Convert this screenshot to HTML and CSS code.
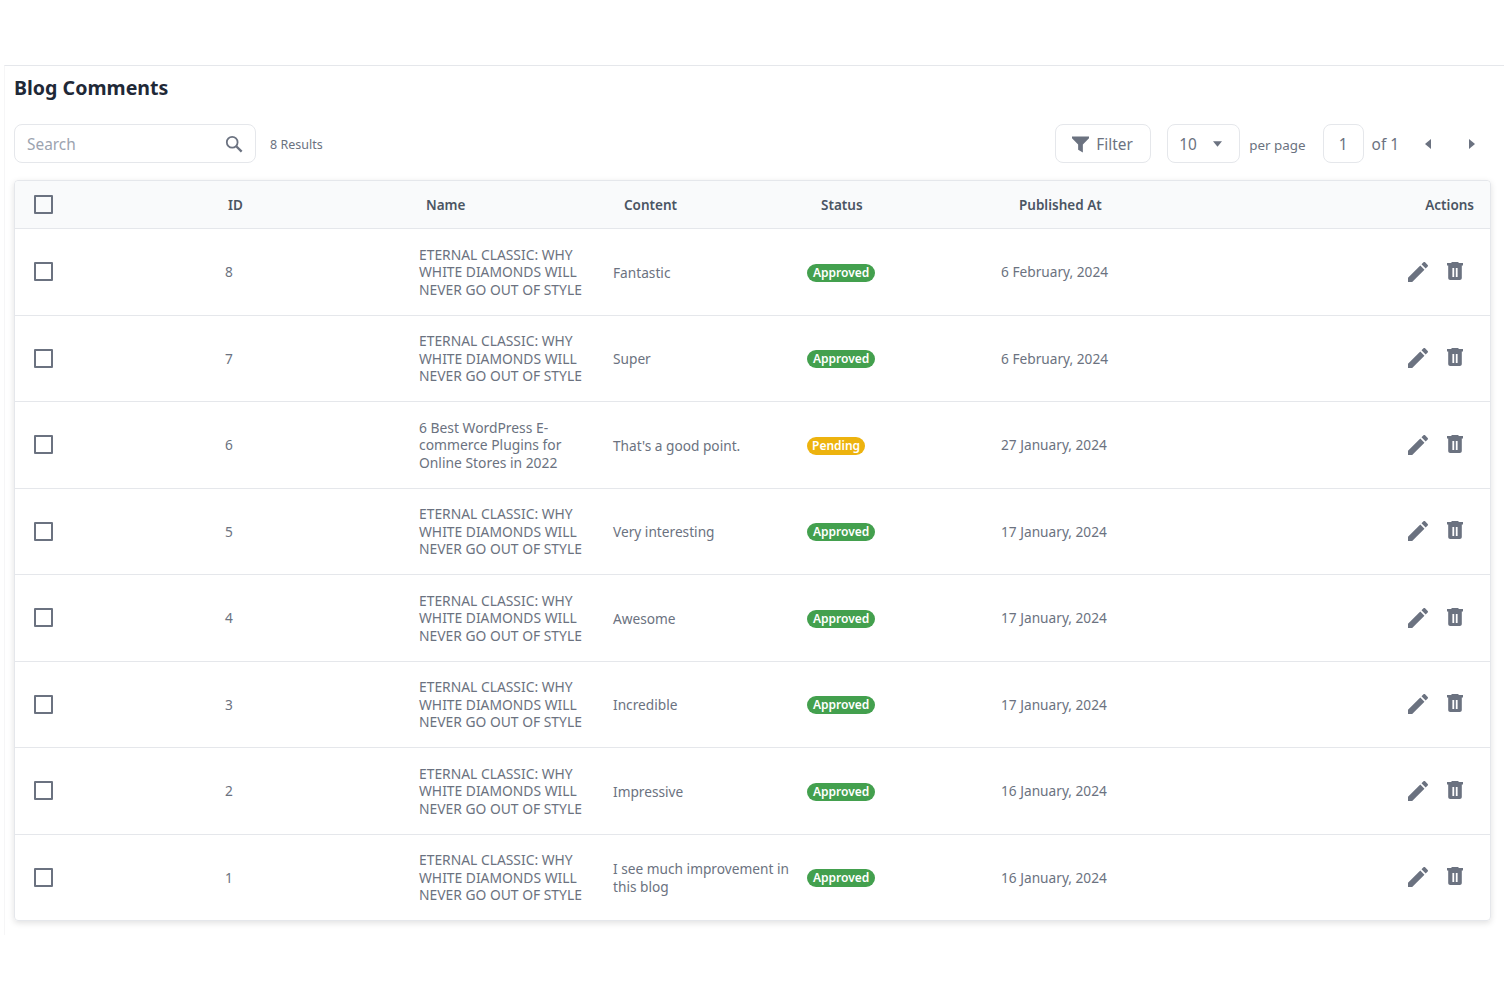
FILE: index.html
```html
<!DOCTYPE html>
<html lang="en">
<head>
    <meta charset="UTF-8">
    <meta name="viewport" content="width=device-width, initial-scale=1.0">
    <title>Blog Comments</title>
    <link rel="stylesheet" href="styles.css">
</head>
<body>
    <svg class="icon-defs" width="0" height="0">
        <symbol id="icon-edit" viewBox="3 3 18 18"><path d="M3 17.25V21h3.75L17.81 9.94l-3.75-3.75L3 17.25zM20.71 7.04c.39-.39.39-1.02 0-1.41l-2.34-2.34c-.39-.39-1.02-.39-1.41 0l-1.83 1.83 3.75 3.75 1.83-1.83z"/></symbol>
        <symbol id="icon-trash" viewBox="0 0 16 18"><path fill-rule="evenodd" d="M5 0h6l1 1h4v2.600h-1.200V16c0 1.100-.9 2-2 2H3.200c-1.100 0-2-.9-2-2V3.600H0V1h4L5 0zM5.400 6v9h1.800V6H5.400zm3.400 0v9h1.800V6H8.800z"/></symbol>
    </svg>

    <div class="page">
        <h1 class="title">Blog Comments</h1>

        <div class="toolbar">
            <div class="search">
                <span class="search-text">Search</span>
                <svg class="search-icon" viewBox="0 0 20 20" fill="none" stroke="currentColor"><circle cx="8" cy="8" r="6" stroke-width="2"/><path d="M12.500 12.500L18.500 18.500" stroke-width="2.600"/></svg>
            </div>
            <span class="results">8 Results</span>

            <div class="toolbar-right">
                <div class="box filter">
                    <svg class="filter-icon" viewBox="0 0 18 18"><path d="M0 1h18v2l-6.500 6.500V18l-5-3V9.500L0 3z"/></svg>
                    Filter
                </div>
                <div class="box per-page-select">
                    10
                    <svg class="caret" viewBox="0 0 10 6"><path d="M0 0h10L5 6z"/></svg>
                </div>
                <span class="per-page">per page</span>
                <div class="box page-number">1</div>
                <span class="page-count">of 1</span>
                <svg class="arrow arrow-prev" viewBox="0 0 6 10"><path d="M6 0v10L0 5z"/></svg>
                <svg class="arrow arrow-next" viewBox="0 0 6 10"><path d="M0 0v10l6-5z"/></svg>
            </div>
        </div>

        <div class="table">
            <div class="table-head">
                <span class="checkbox"></span>
                <span>ID</span>
                <span>Name</span>
                <span>Content</span>
                <span>Status</span>
                <span>Published At</span>
                <span class="head-actions">Actions</span>
            </div>

            <div class="row">
                <span class="checkbox"></span>
                <span>8</span>
                <span class="name">ETERNAL CLASSIC: WHY WHITE DIAMONDS WILL NEVER GO OUT OF STYLE</span>
                <span class="content">Fantastic</span>
                <span><span class="badge approved">Approved</span></span>
                <span>6 February, 2024</span>
                <span class="actions"><svg class="edit"><use href="#icon-edit"/></svg><svg class="trash"><use href="#icon-trash"/></svg></span>
            </div>
            <div class="row">
                <span class="checkbox"></span>
                <span>7</span>
                <span class="name">ETERNAL CLASSIC: WHY WHITE DIAMONDS WILL NEVER GO OUT OF STYLE</span>
                <span class="content">Super</span>
                <span><span class="badge approved">Approved</span></span>
                <span>6 February, 2024</span>
                <span class="actions"><svg class="edit"><use href="#icon-edit"/></svg><svg class="trash"><use href="#icon-trash"/></svg></span>
            </div>
            <div class="row">
                <span class="checkbox"></span>
                <span>6</span>
                <span class="name">6 Best WordPress E-commerce Plugins for Online Stores in 2022</span>
                <span class="content">That's a good point.</span>
                <span><span class="badge pending">Pending</span></span>
                <span>27 January, 2024</span>
                <span class="actions"><svg class="edit"><use href="#icon-edit"/></svg><svg class="trash"><use href="#icon-trash"/></svg></span>
            </div>
            <div class="row">
                <span class="checkbox"></span>
                <span>5</span>
                <span class="name">ETERNAL CLASSIC: WHY WHITE DIAMONDS WILL NEVER GO OUT OF STYLE</span>
                <span class="content">Very interesting</span>
                <span><span class="badge approved">Approved</span></span>
                <span>17 January, 2024</span>
                <span class="actions"><svg class="edit"><use href="#icon-edit"/></svg><svg class="trash"><use href="#icon-trash"/></svg></span>
            </div>
            <div class="row">
                <span class="checkbox"></span>
                <span>4</span>
                <span class="name">ETERNAL CLASSIC: WHY WHITE DIAMONDS WILL NEVER GO OUT OF STYLE</span>
                <span class="content">Awesome</span>
                <span><span class="badge approved">Approved</span></span>
                <span>17 January, 2024</span>
                <span class="actions"><svg class="edit"><use href="#icon-edit"/></svg><svg class="trash"><use href="#icon-trash"/></svg></span>
            </div>
            <div class="row">
                <span class="checkbox"></span>
                <span>3</span>
                <span class="name">ETERNAL CLASSIC: WHY WHITE DIAMONDS WILL NEVER GO OUT OF STYLE</span>
                <span class="content">Incredible</span>
                <span><span class="badge approved">Approved</span></span>
                <span>17 January, 2024</span>
                <span class="actions"><svg class="edit"><use href="#icon-edit"/></svg><svg class="trash"><use href="#icon-trash"/></svg></span>
            </div>
            <div class="row">
                <span class="checkbox"></span>
                <span>2</span>
                <span class="name">ETERNAL CLASSIC: WHY WHITE DIAMONDS WILL NEVER GO OUT OF STYLE</span>
                <span class="content">Impressive</span>
                <span><span class="badge approved">Approved</span></span>
                <span>16 January, 2024</span>
                <span class="actions"><svg class="edit"><use href="#icon-edit"/></svg><svg class="trash"><use href="#icon-trash"/></svg></span>
            </div>
            <div class="row">
                <span class="checkbox"></span>
                <span>1</span>
                <span class="name">ETERNAL CLASSIC: WHY WHITE DIAMONDS WILL NEVER GO OUT OF STYLE</span>
                <span class="content">I see much improvement in this blog</span>
                <span><span class="badge approved">Approved</span></span>
                <span>16 January, 2024</span>
                <span class="actions"><svg class="edit"><use href="#icon-edit"/></svg><svg class="trash"><use href="#icon-trash"/></svg></span>
            </div>
        </div>
    </div>
</body>
</html>
```

FILE: styles.css
```css
body {
    margin: 0;
    font-family: "Noto Sans", "Open Sans", sans-serif;
    font-size: 13.7px;
    color: #6b7280;
    background-color: white;
}

.icon-defs {
    position: absolute;
}

.page {
    margin: 65px 4px 0 4px;
    padding: 8px 13px 14px 9px;
    border-top: 1px solid #e5e7eb;
    border-left: 1px solid #f6f6f7;
}

.title {
    margin: 0;
    font-size: 19.6px;
    line-height: 28px;
    font-weight: 700;
    color: #1f2937;
}

.toolbar {
    display: flex;
    align-items: center;
    margin-top: 22px;
    height: 39px;
}

.search {
    display: flex;
    align-items: center;
    justify-content: space-between;
    box-sizing: border-box;
    width: 242px;
    height: 39px;
    padding: 0 12px;
    border: 1px solid #e5e7eb;
    border-radius: 8px;
    font-size: 15.4px;
    color: #9ca3af;
}

.search-text {
    margin-top: 2px;
}

.search-icon {
    width: 18px;
    height: 18px;
    color: #6b7280;
}

.results {
    margin-left: 14px;
    margin-top: 2px;
    font-size: 12.5px;
}

.toolbar-right {
    display: flex;
    align-items: center;
    margin-left: auto;
    margin-right: 16px;
}

.box {
    display: flex;
    align-items: center;
    box-sizing: border-box;
    height: 39px;
    padding-top: 2px;
    border: 1px solid #e5e7eb;
    border-radius: 8px;
    font-size: 15.4px;
    color: #6b7280;
}

.filter {
    width: 96px;
    padding-left: 16px;
}

.filter-icon {
    width: 17px;
    height: 18px;
    margin-top: -2px;
    margin-right: 7px;
    fill: #6b7280;
}

.per-page-select {
    justify-content: space-between;
    width: 73px;
    margin-left: 16px;
    padding-left: 11px;
    padding-right: 17px;
}

.caret {
    width: 9px;
    height: 6px;
    margin-top: -2px;
    fill: #6b7280;
}

.per-page {
    margin-left: 9px;
    margin-top: 2px;
    font-size: 13.4px;
}

.page-number {
    justify-content: center;
    width: 41px;
    margin-left: 17px;
}

.page-count {
    margin-left: 8px;
    margin-top: 2px;
    font-size: 15.4px;
}

.arrow {
    width: 6px;
    height: 10px;
    fill: #6b7280;
}

.arrow-prev {
    margin-left: 26px;
}

.arrow-next {
    margin-left: 38px;
}

.table {
    margin-top: 17px;
    border: 1px solid #e5e7eb;
    border-radius: 4px;
    box-shadow: 0 2px 6px rgba(0, 0, 0, 0.12);
}

.table-head {
    display: grid;
    grid-template-columns: 194px 198px 198px 197px 198px 1fr auto;
    align-items: center;
    box-sizing: border-box;
    height: 47px;
    padding: 0 16px 0 19px;
    background-color: #f9fafb;
    border-radius: 4px 4px 0 0;
    font-size: 13.5px;
    font-weight: 600;
    color: #4b5563;
}

.head-actions {
    grid-column: 7;
}

.row {
    display: grid;
    grid-template-columns: 191px 194px 194px 194px 194px 1fr auto;
    align-items: center;
    box-sizing: border-box;
    height: 86.5px;
    padding: 0 27px 0 19px;
    border-top: 1px solid #e5e7eb;
    line-height: 17.5px;
}

.name {
    padding-right: 8px;
    font-size: 13.85px;
}

.content {
    padding-right: 8px;
    padding-top: 1px;
}

.checkbox {
    display: block;
    box-sizing: border-box;
    width: 19px;
    height: 19px;
    border: 2px solid #6b7280;
    border-radius: 1px;
}

.badge {
    display: inline-block;
    margin-top: 2px;
    padding: 0 6px;
    border-radius: 9px;
    font-size: 12px;
    line-height: 18px;
    font-weight: 600;
    color: white;
    vertical-align: middle;
}

.approved {
    background-color: #43a04e;
}

.pending {
    padding: 0 5px;
    background-color: #edb30e;
}

.actions {
    display: flex;
    align-items: center;
    gap: 19px;
}

.edit {
    width: 20px;
    height: 20px;
    fill: #6b7280;
}

.trash {
    width: 16px;
    height: 18px;
    margin-top: -2px;
    fill: #6b7280;
}
```
